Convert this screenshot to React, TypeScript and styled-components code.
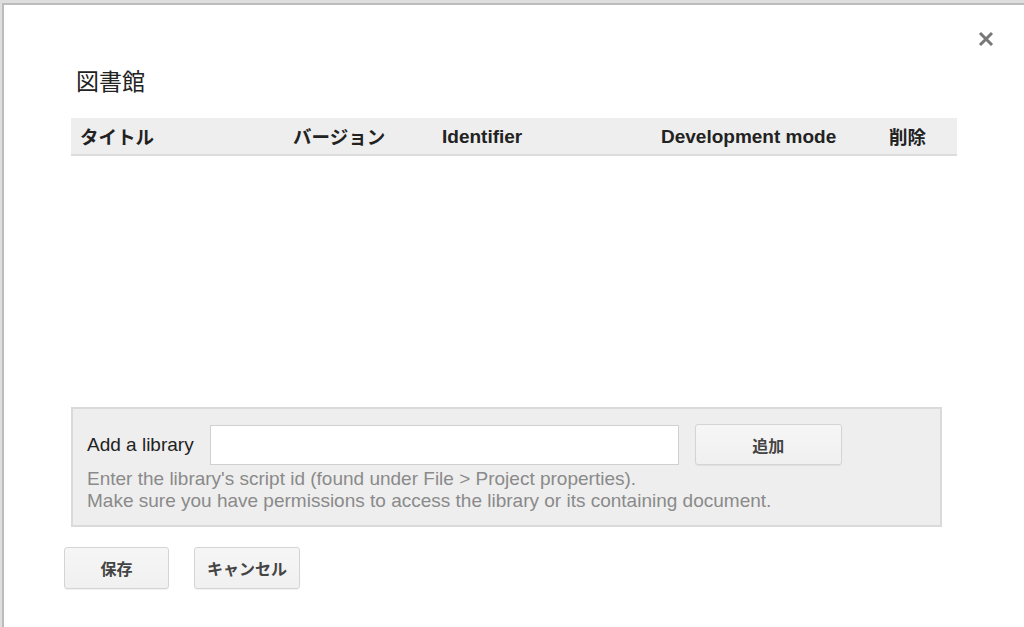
import React from "react";
import styled, { createGlobalStyle } from "styled-components";

const GlobalStyle = createGlobalStyle`
  html, body {
    margin: 0;
    padding: 0;
    height: 100%;
    overflow: hidden;
    background: #dedede;
  }
  body {
    font-family: "Liberation Sans", Arial, "Noto Sans CJK JP", sans-serif;
  }
`;

const Dialog = styled.div`
  position: relative;
  margin: 3px 0 0 2px;
  height: 640px;
  box-sizing: border-box;
  background: #ffffff;
  border-top: 2px solid #bcbcbc;
  border-left: 2px solid #bcbcbc;
  padding: 61px 0 0 67px;
  display: flex;
  flex-direction: column;
`;

const Close = styled.button`
  position: absolute;
  top: 24px;
  right: 28px;
  width: 20px;
  height: 20px;
  padding: 0;
  border: none;
  background: transparent;
  display: flex;
  align-items: center;
  justify-content: center;
  cursor: pointer;
`;

const Title = styled.h1`
  margin: 0 0 24px 5px;
  font-size: 23px;
  line-height: 28px;
  font-weight: normal;
  color: #222;
  font-family: "Noto Sans CJK JP", sans-serif;
`;

const HeaderRow = styled.div`
  width: 886px;
  height: 38px;
  box-sizing: border-box;
  background: #eeeeee;
  border-bottom: 2px solid #dcdcdc;
  display: flex;
  align-items: center;
  padding-left: 9px;
`;

const HeaderCell = styled.div<{ $w: number; $cjk?: boolean }>`
  width: ${(p) => p.$w}px;
  flex: none;
  font-weight: bold;
  font-size: ${(p) => (p.$cjk ? "18.5px" : "19px")};
  color: #222;
  font-family: ${(p) =>
    p.$cjk
      ? `"Noto Sans CJK JP", sans-serif`
      : `"Liberation Sans", Arial, sans-serif`};
  white-space: nowrap;
  line-height: 36px;
  padding-top: ${(p) => (p.$cjk ? "0" : "2px")};
`;

const TableBody = styled.div`
  height: 251px;
`;

const Panel = styled.div`
  width: 871px;
  height: 120px;
  box-sizing: border-box;
  background: #eeeeee;
  border: 2px solid #dadada;
  padding: 15px 0 0 14px;
  display: flex;
  flex-direction: column;
`;

const AddRow = styled.div`
  display: flex;
  align-items: center;
`;

const Label = styled.label`
  font-size: 19px;
  color: #222;
  margin-right: 16px;
`;

const Input = styled.input`
  width: 469px;
  height: 40px;
  box-sizing: border-box;
  border: 1px solid #d0d0d0;
  background: #fff;
  margin-right: 16px;
  outline: none;
`;

const Button = styled.button<{ $w: number; $h: number }>`
  width: ${(p) => p.$w}px;
  height: ${(p) => p.$h}px;
  box-sizing: border-box;
  border: 1px solid #d4d4d4;
  border-radius: 3px;
  background: linear-gradient(#f6f6f6, #f0f0f0);
  box-shadow: 0 1px 1px rgba(0, 0, 0, 0.06);
  font-family: "Noto Sans CJK JP", sans-serif;
  font-weight: bold;
  font-size: 16px;
  color: #444;
  padding: 0;
  cursor: pointer;
`;

const Help = styled.div`
  margin-top: 3px;
  font-size: 19px;
  line-height: 22px;
  color: #8a8a8a;
  white-space: nowrap;
`;

const Footer = styled.div`
  display: flex;
  gap: 25px;
  margin: 20px 0 0 -7px;
`;

export default function App() {
  return (
    <>
      <GlobalStyle />
      <Dialog>
        <Close aria-label="close">
          <svg width="16" height="16" viewBox="0 0 16 16">
            <path
              d="M2 2 L14 14 M14 2 L2 14"
              stroke="#777"
              strokeWidth="3"
              strokeLinecap="butt"
            />
          </svg>
        </Close>
        <Title>図書館</Title>
        <HeaderRow>
          <HeaderCell $w={213} $cjk>タイトル</HeaderCell>
          <HeaderCell $w={149} $cjk>バージョン</HeaderCell>
          <HeaderCell $w={219}>Identifier</HeaderCell>
          <HeaderCell $w={228}>Development mode</HeaderCell>
          <HeaderCell $w={60} $cjk>削除</HeaderCell>
        </HeaderRow>
        <TableBody />
        <Panel>
          <AddRow>
            <Label>Add a library</Label>
            <Input type="text" />
            <Button $w={147} $h={41}>追加</Button>
          </AddRow>
          <Help>
            Enter the library's script id (found under File &gt; Project properties).
            <br />
            Make sure you have permissions to access the library or its containing document.
          </Help>
        </Panel>
        <Footer>
          <Button $w={105} $h={42}>保存</Button>
          <Button $w={106} $h={42}>キャンセル</Button>
        </Footer>
      </Dialog>
    </>
  );
}
